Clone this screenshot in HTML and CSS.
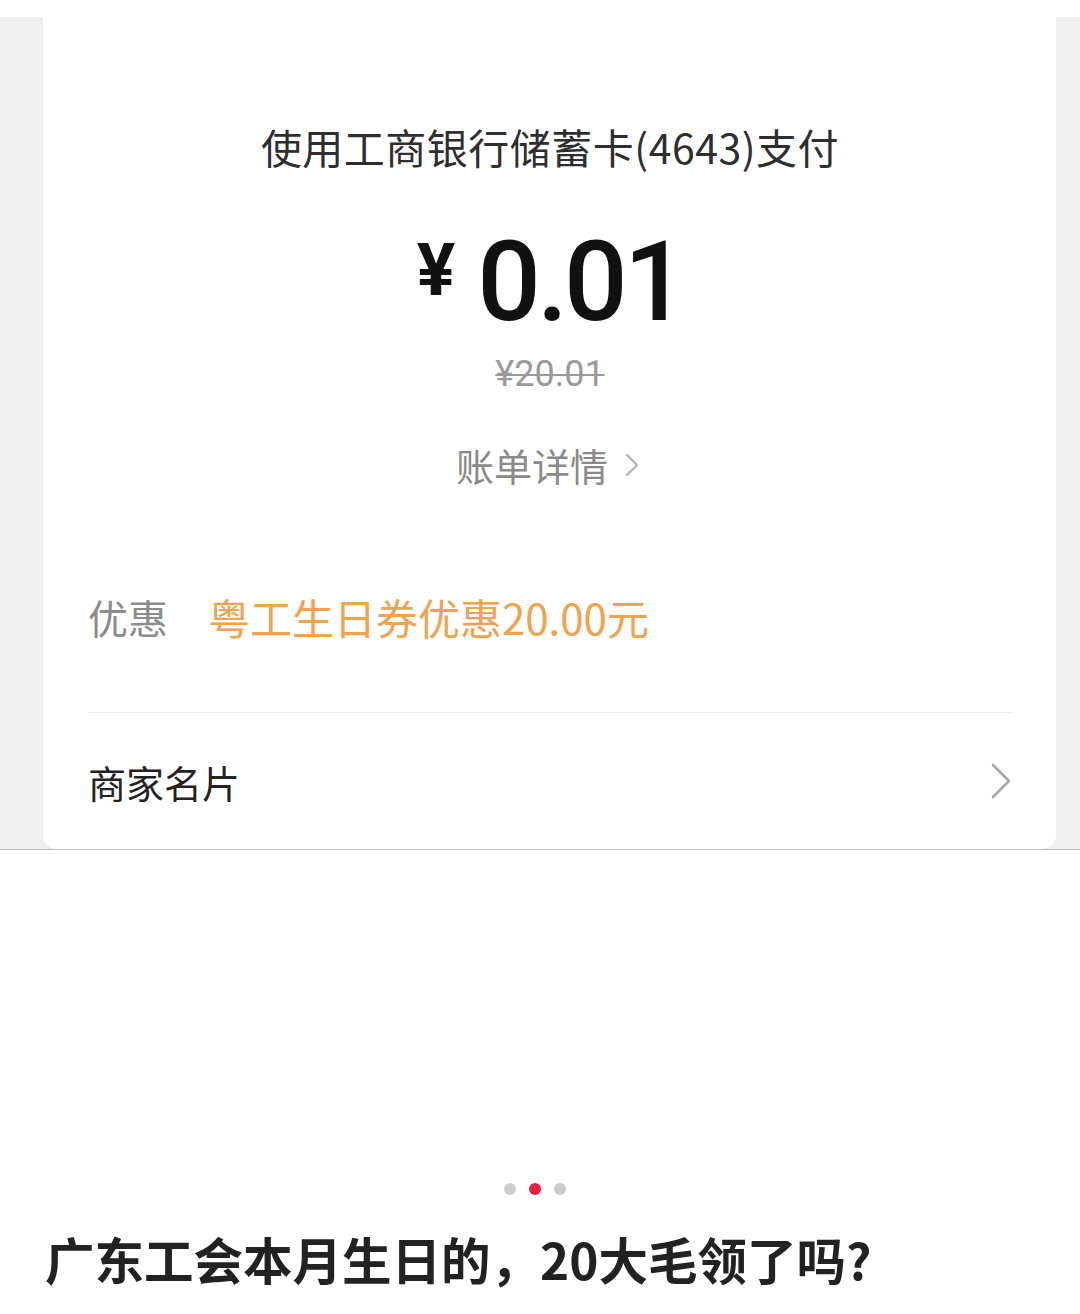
FILE: index.html
```html
<!DOCTYPE html>
<html lang="zh-CN">
<head>
<meta charset="utf-8">
<title>支付</title>
<link rel="stylesheet" href="styles.css">
</head>
<body>
<div class="panel">
  <div class="card">
    <div class="title">使用工商银行储蓄卡(4643)支付</div>
    <div class="amount"><span class="yen">¥</span><span class="num">0.01</span></div>
    <div class="orig">¥20.01</div>
    <div class="bill">账单详情<svg class="bill-arrow" width="16" height="28" viewBox="0 0 16 28"><path d="M3 4 L13 14 L3 24" fill="none" stroke="#b5b5b5" stroke-width="2.4" stroke-linecap="round" stroke-linejoin="round"/></svg></div>
    <div class="promo"><span class="promo-label">优惠</span><span class="promo-value">粤工生日券优惠20.00元</span></div>
    <div class="divider"></div>
    <div class="merchant"><span>商家名片</span><svg width="22" height="38" viewBox="0 0 22 38"><path d="M3 3 L19 19 L3 35" fill="none" stroke="#a8a8a8" stroke-width="2.6" stroke-linecap="round" stroke-linejoin="round"/></svg></div>
  </div>
</div>
<div class="below">
  <div class="dots"><span class="dot"></span><span class="dot active"></span><span class="dot"></span></div>
  <h1 class="headline">广东工会本月生日的，20大毛领了吗?</h1>
</div>
</body>
</html>
```

FILE: styles.css
```css
html, body {
  margin: 0;
  padding: 0;
  background: #ffffff;
}
body {
  width: 1080px;
  height: 1314px;
  overflow: hidden;
  font-family: "Noto Sans CJK SC", "Noto Sans", sans-serif;
}
.panel {
  margin-top: 17px;
  background: #efefef;
  padding: 0 24px 0 43px;
  border-bottom: 1px solid #bcbcbc;
  display: flex;
}
.card {
  flex: 1;
  background: #ffffff;
  border-radius: 0 0 14px 14px;
  margin-top: -17px;
  padding: 116px 44px 0 45px;
  height: 849px;
  box-sizing: border-box;
  display: flex;
  flex-direction: column;
}
.title {
  text-align: center;
  font-size: 41px;
  line-height: 60px;
  color: #2e2e2e;
  letter-spacing: 0.5px;
}
.amount {
  margin-top: 51px;
  display: flex;
  justify-content: center;
  align-items: flex-start;
  height: 110px;
  color: #111;
}
.yen {
  font-family: "Roboto", "Liberation Sans", sans-serif;
  font-weight: 700;
  font-size: 72px;
  line-height: 70px;
  margin-right: 22px;
  margin-top: 9px;
}
.num {
  font-family: "Roboto", "Liberation Sans", sans-serif;
  font-weight: 500;
  font-size: 112px;
  line-height: 110px;
  letter-spacing: -4px;
}
.orig {
  margin-top: 15px;
  text-align: center;
  font-family: "Roboto", "Liberation Sans", sans-serif;
  font-size: 36px;
  line-height: 44px;
  color: #9a9a9a;
  text-decoration: line-through;
  text-decoration-thickness: 2px;
}
.bill {
  margin-top: 44px;
  display: flex;
  justify-content: center;
  align-items: center;
  font-size: 38px;
  line-height: 50px;
  color: #8a8a8a;
  gap: 16px;
  padding-right: 4px;
}
.promo {
  margin-top: 97px;
  display: flex;
  align-items: center;
  font-size: 40px;
  line-height: 60px;
}
.promo-label {
  color: #8c8c8c;
  width: 120px;
}
.promo-value {
  color: #f0a24e;
  font-size: 42px;
}
.divider {
  margin-top: 65px;
  height: 1px;
  background: #ededed;
}
.merchant {
  flex: 1;
  display: flex;
  align-items: center;
  justify-content: space-between;
  font-size: 38px;
  color: #222;
  padding-bottom: 0;
}
.below {
  display: flex;
  flex-direction: column;
  align-items: flex-start;
  padding: 0 45px;
}
.dots {
  align-self: center;
  margin-top: 333px;
  display: flex;
  gap: 13px;
  padding-right: 11px;
}
.dot {
  width: 12px;
  height: 12px;
  border-radius: 50%;
  background: #cccccc;
}
.dot.active {
  background: #e81e3c;
}
.headline {
  margin: 34px 0 0 0;
  font-size: 49.5px;
  line-height: 60px;
  font-weight: 700;
  color: #222;
}
```
